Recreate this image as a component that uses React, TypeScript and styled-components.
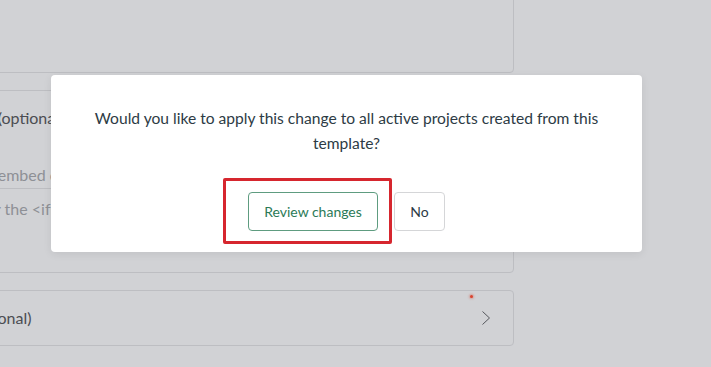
import styled, { createGlobalStyle } from 'styled-components'

const GlobalStyle = createGlobalStyle`
  html, body {
    margin: 0;
    padding: 0;
    width: 711px;
    height: 367px;
    overflow: hidden;
    background: #d1d2d5;
    font-family: Lato, "Noto Sans", sans-serif;
  }
`

const Page = styled.div`
  position: relative;
  width: 711px;
  height: 367px;
  overflow: hidden;
`

const Column = styled.div`
  display: flex;
  flex-direction: column;
  gap: 17px;
  width: 616px;
  margin-left: -102px;
  margin-top: -40px;
`

const Card = styled.div<{ $height: number }>`
  box-sizing: border-box;
  height: ${(p) => p.$height}px;
  border: 1px solid #bdbec2;
  border-radius: 4px;
  background: #d1d2d5;
`

const FieldCard = styled(Card)`
  display: flex;
  flex-direction: column;
  padding: 17px 0 0 0;
`

// indent puts each line where the reference crops it
const Label = styled.div<{ $indent: number }>`
  margin-left: ${(p) => p.$indent}px;
  font-size: 16px;
  line-height: 20px;
  color: #4b4d52;
  white-space: nowrap;
`

const Help = styled.div<{ $indent: number }>`
  margin-top: 37px;
  margin-left: ${(p) => p.$indent}px;
  font-size: 16px;
  line-height: 20px;
  color: #8e9096;
  white-space: nowrap;
`

const InputBox = styled.div<{ $indent: number }>`
  margin-top: 3px;
  border-top: 1px solid #bdbec2;
  padding: 10px 0 0 ${(p) => p.$indent}px;
  font-size: 16px;
  line-height: 20px;
  color: #8e9096;
  white-space: nowrap;
`

const RowCard = styled(Card)`
  display: flex;
  align-items: center;
  justify-content: space-between;
  padding: 0 22px 0 0;
`

const Chevron = styled.svg`
  width: 10px;
  height: 16px;
`

const Dot = styled.div`
  position: absolute;
  left: 470px;
  top: 295px;
  width: 3px;
  height: 3px;
  border-radius: 50%;
  background: #d9442e;
  box-shadow: 0 0 2px 1px rgba(217, 68, 46, 0.35);
`

const Overlay = styled.div`
  position: absolute;
  inset: 0;
  padding: 75px 0 0 51px;
`

const Modal = styled.div`
  box-sizing: border-box;
  width: 591px;
  height: 177px;
  background: #ffffff;
  border-radius: 4px;
  box-shadow: 0 2px 8px rgba(0, 0, 0, 0.08);
  display: flex;
  flex-direction: column;
  align-items: center;
  padding: 31px 20px 0;
`

const Message = styled.p`
  margin: 0;
  max-width: 530px;
  text-align: center;
  font-size: 15.6px;
  line-height: 25px;
  color: #2d3b45;
`

const Actions = styled.div`
  position: relative;
  display: flex;
  gap: 16px;
  margin-top: 36px;
`

const Button = styled.button<{ $primary?: boolean; $width: number }>`
  box-sizing: border-box;
  width: ${(p) => p.$width}px;
  height: 39px;
  padding: 0;
  border-radius: 4px;
  background: #ffffff;
  border: 1px solid ${(p) => (p.$primary ? '#5e9c80' : '#d5d6d8')};
  color: ${(p) => (p.$primary ? '#2b7a57' : '#2d3b45')};
  font-family: Lato, "Noto Sans", sans-serif;
  font-size: 14px;
  white-space: nowrap;
`

const Highlight = styled.div`
  position: absolute;
  left: -25px;
  top: -14px;
  width: 169px;
  height: 66px;
  box-sizing: border-box;
  border: 3px solid #d6262e;
  border-radius: 2px;
  pointer-events: none;
`

export default function App() {
  return (
    <Page>
      <GlobalStyle />
      <Column>
        <Card $height={113} />
        <FieldCard $height={183}>
          <Label $indent={8}>Embed code (optional)</Label>
          <Help $indent={29}>Paste the embed code</Help>
          <InputBox $indent={64}>Enter the &lt;iframe&gt; code</InputBox>
        </FieldCard>
        <RowCard $height={56}>
          <Label $indent={-18}>Caption file (optional)</Label>
          <Chevron viewBox="0 0 10 16">
            <path d="M1.5 1.5 L8.5 8 L1.5 14.5" fill="none" stroke="#55575c" strokeWidth="1" />
          </Chevron>
        </RowCard>
      </Column>
      <Dot />
      <Overlay>
        <Modal>
          <Message>
            Would you like to apply this change to all active projects created from this template?
          </Message>
          <Actions>
            <Highlight />
            <Button $primary $width={130}>Review changes</Button>
            <Button $width={51}>No</Button>
          </Actions>
        </Modal>
      </Overlay>
    </Page>
  )
}
